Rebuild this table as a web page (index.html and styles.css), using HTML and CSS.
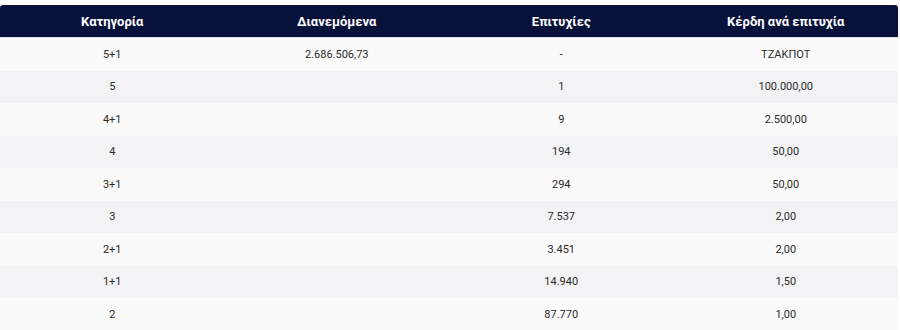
FILE: index.html
```html
<!DOCTYPE html>
<html lang="el">
<head>
<meta charset="utf-8">
<link rel="stylesheet" href="styles.css">
</head>
<body>
<table class="results">
  <thead>
    <tr><th>Κατηγορία</th><th>Διανεμόμενα</th><th>Επιτυχίες</th><th>Κέρδη ανά επιτυχία</th></tr>
  </thead>
  <tbody>
    <tr><td>5+1</td><td>2.686.506,73</td><td>-</td><td>ΤΖΑΚΠΟΤ</td></tr>
    <tr><td>5</td><td></td><td>1</td><td>100.000,00</td></tr>
    <tr><td>4+1</td><td></td><td>9</td><td>2.500,00</td></tr>
    <tr><td>4</td><td></td><td>194</td><td>50,00</td></tr>
    <tr><td>3+1</td><td></td><td>294</td><td>50,00</td></tr>
    <tr><td>3</td><td></td><td>7.537</td><td>2,00</td></tr>
    <tr><td>2+1</td><td></td><td>3.451</td><td>2,00</td></tr>
    <tr><td>1+1</td><td></td><td>14.940</td><td>1,50</td></tr>
    <tr><td>2</td><td></td><td>87.770</td><td>1,00</td></tr>
  </tbody>
</table>
</body>
</html>
```
FILE: styles.css
```css
html, body { margin: 0; padding: 0; background: #ffffff; }
body { padding-top: 5px; font-family: Roboto, "Noto Sans", sans-serif; }
.results {
  width: 898px;
  border-collapse: separate;
  border-spacing: 0;
  table-layout: fixed;
}
.results th {
  background: #08113a;
  color: #ffffff;
  font-weight: 700;
  font-size: 13px;
  height: 32px;
  padding: 0;
  text-align: center;
  border-bottom: 1px solid #e6e6ea;
}
.results th:first-child { border-top-left-radius: 3px; }
.results th:last-child { border-top-right-radius: 3px; }
.results td {
  height: 32.5px;
  padding: 0;
  text-align: center;
  font-size: 11px;
  color: #2b2b2b;
}
.results tbody tr:nth-child(odd) td { background: #fafafa; }
.results tbody tr:nth-child(even) td { background: #f3f3f5; }
```
